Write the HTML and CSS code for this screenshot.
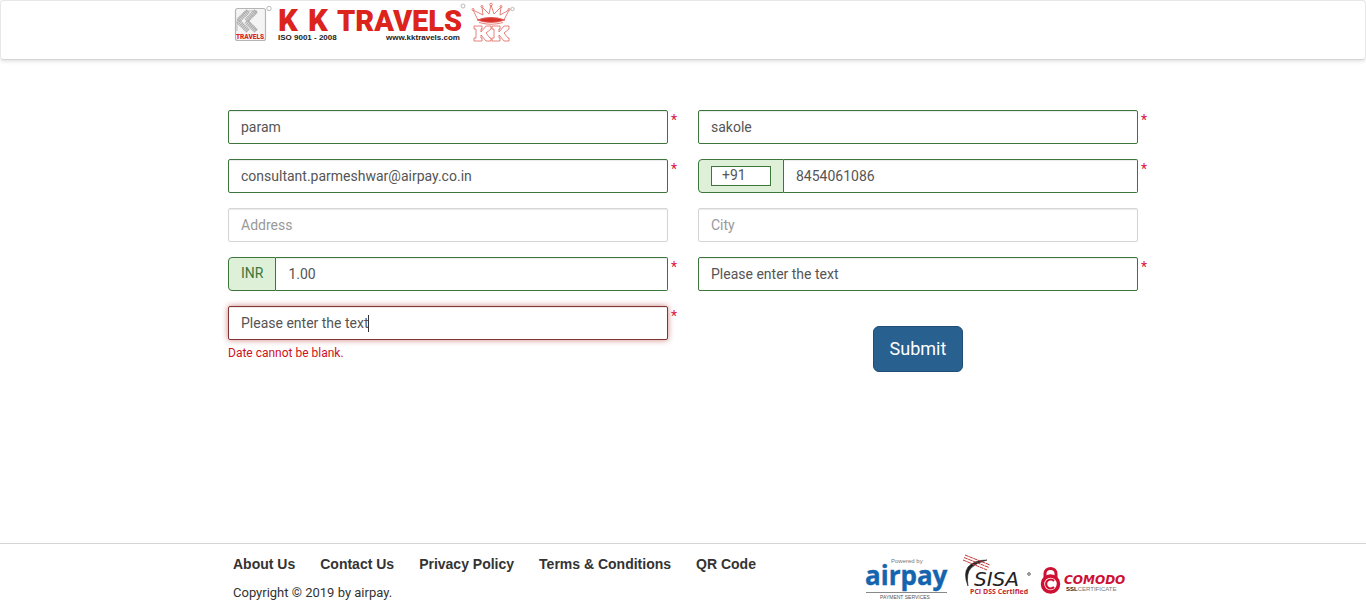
FILE: index.html
```html
<!DOCTYPE html>
<html lang="en">
<head>
<meta charset="utf-8">
<title>K K Travels - Payment</title>
<link rel="stylesheet" href="styles.css">
</head>
<body>
<header class="site-header">
  <div class="container">
    <svg class="brand" width="290" height="44" viewBox="228 0 290 44" role="img" aria-label="K K Travels">
      <rect x="235.500" y="7.500" width="30" height="32" rx="2" fill="#f4f4f4" stroke="#b5b5b5" stroke-width="1.200"/>
      <g fill="none" stroke="#b0b0b0" stroke-width="5" stroke-dasharray="1.300 .5">
        <path d="M248 10L238 20L248 30"/>
        <path d="M256 10L246 20L256 30"/>
      </g>
      <path d="M237 30V20L246 10H257L248 20L257 30" fill="none" stroke="#aaa" stroke-width=".8"/>
      <text class="logo-small" x="236" y="38" font-size="6.500">TRAVELS</text>
      <circle cx="269" cy="7.500" r="2.200" fill="none" stroke="#aaa" stroke-width=".8"/>
      <g class="logo-name">
        <text x="278" y="30" font-size="31">K</text>
        <text x="308" y="30" font-size="31">K</text>
        <text x="337" y="30" font-size="29">TRAVELS</text>
      </g>
      <g class="logo-note" font-size="8">
        <text x="278" y="39">ISO 9001 - 2008</text>
        <text x="386" y="39">www.kktravels.com</text>
      </g>
      <circle cx="463" cy="5" r="2" fill="none" stroke="#aaa" stroke-width=".8"/>
      <g stroke="#e0625a" fill="#fff" stroke-width=".8">
        <path d="M478 19L473 9L483 14L482 6L489 13L491 4L494 13L501 6L500 14L509 9L504 19Q491 14 478 19Z"/>
        <path d="M477 19Q491 14 505 19Q491 24 477 19Z" fill="#d9302a"/>
        <path d="M479 21.500Q491 25 503 21.500" fill="none"/>
        <circle cx="473" cy="8.500" r="1"/><circle cx="482" cy="5.500" r="1"/><circle cx="491" cy="3.500" r="1.300"/><circle cx="501" cy="5.500" r="1"/><circle cx="509" cy="8.500" r="1"/>
        <path d="M474 25H482V28H481V31L486 25H491V28L486 32L490 37H491V40H486L481 34V37H482V40H474V37H476V28H474Z"/>
        <path d="M492 25H500V28H499V31L504 25H509V28L504 32L508 37H509V40H504L499 34V37H500V40H492V37H494V28H492Z"/>
      </g>
      <circle cx="512.500" cy="8" r="1.700" fill="none" stroke="#aaa" stroke-width=".8"/>
    </svg>
  </div>
</header>

<main class="container">
  <form class="pay-form">
    <div class="field valid">
      <input class="control" type="text" aria-label="First name" value="param">
      <span class="required">*</span>
    </div>
    <div class="field valid">
      <input class="control" type="text" aria-label="Last name" value="sakole">
      <span class="required">*</span>
    </div>
    <div class="field valid">
      <input class="control" type="email" aria-label="Email" value="consultant.parmeshwar@airpay.co.in">
      <span class="required">*</span>
    </div>
    <div class="field valid">
      <div class="group">
        <span class="addon"><input class="code" type="text" aria-label="Country code" value="+91"></span>
        <input class="control" type="tel" aria-label="Phone" value="8454061086">
      </div>
      <span class="required">*</span>
    </div>
    <div class="field">
      <input class="control" type="text" aria-label="Address" placeholder="Address">
    </div>
    <div class="field">
      <input class="control" type="text" aria-label="City" placeholder="City">
    </div>
    <div class="field valid">
      <div class="group">
        <label class="addon" for="amount">INR</label>
        <input class="control" id="amount" type="text" value="1.00">
      </div>
      <span class="required">*</span>
    </div>
    <div class="field valid">
      <input class="control" type="text" aria-label="Remarks" value="Please enter the text">
      <span class="required">*</span>
    </div>
    <div class="field invalid">
      <div class="entry">
        <input class="control" type="text" aria-label="Date" aria-describedby="date-error" value="Please enter the text">
        <span class="caret"></span>
      </div>
      <span class="required">*</span>
      <p class="error" id="date-error">Date cannot be blank.</p>
    </div>
    <div class="field actions">
      <button class="submit" type="submit">Submit</button>
    </div>
  </form>
</main>

<footer class="site-footer">
  <div class="container footer-row">
    <div>
      <nav class="links">
        <a href="#">About Us</a>
        <a href="#">Contact Us</a>
        <a href="#">Privacy Policy</a>
        <a href="#">Terms &amp; Conditions</a>
        <a href="#">QR Code</a>
      </nav>
      <p class="copyright">Copyright © 2019 by airpay.</p>
    </div>
    <div class="badges">
      <svg width="98" height="48" viewBox="864 554 98 48" role="img" aria-label="Powered by airpay">
        <text x="891" y="563" font-size="6" fill="#777" font-family="Liberation Sans, sans-serif">Powered by</text>
        <text x="865" y="585" font-size="26" font-weight="700" fill="#1565ae" stroke="#1565ae" stroke-width=".4" font-family="Open Sans, sans-serif">airpay</text>
        <path d="M866 592.500H947" stroke="#888"/>
        <text x="880" y="599" font-size="5" fill="#555" font-family="Liberation Sans, sans-serif">PAYMENT SERVICES</text>
      </svg>
      <svg width="76" height="48" viewBox="962 554 76 48" role="img" aria-label="SISA PCI DSS Certified">
        <path d="M987 560Q974 560 968 567Q963 574 968 586Q966 573 971 568Q976 563 987 560Z" fill="#222" stroke="#222" stroke-width=".6"/>
        <path d="M965 555L990 565M964 557.500L989 567.500M963 560L987 570" stroke="#c23a3a" stroke-width="1" stroke-dasharray="4 .5"/>
        <text x="974" y="586" font-size="20" font-style="italic" fill="#222" font-family="DejaVu Sans, sans-serif">SISA</text>
        <circle cx="1029" cy="574" r="1.300" fill="none" stroke="#333" stroke-width=".8"/>
        <text x="970" y="594" font-size="7" font-weight="700" fill="#c32630" font-family="Open Sans, sans-serif">PCI DSS Certified</text>
      </svg>
      <svg width="90" height="48" viewBox="1038 554 90 48" role="img" aria-label="Comodo SSL Certificate">
        <g fill="none" stroke="#ce1033">
          <path d="M1045 577V573.500A5.500 5 0 0 1 1056 573.500V577" stroke-width="3"/>
          <circle cx="1050.500" cy="584" r="8" stroke-width="3.500" fill="#fff"/>
          <path d="M1054 581A4.500 4.500 0 1 0 1054 587" stroke-width="2.200"/>
        </g>
        <text x="1064" y="584" font-size="12" font-weight="700" font-style="italic" fill="#ce1033" font-family="DejaVu Sans, sans-serif">COMODO</text>
        <text x="1066" y="591" font-size="6" fill="#777" font-family="Liberation Sans, sans-serif"><tspan font-weight="700" fill="#222">SSL</tspan>CERTIFICATE</text>
      </svg>
    </div>
  </div>
</footer>
</body>
</html>
```
FILE: styles.css
```css
* { box-sizing: border-box; }

body {
  display: flex;
  flex-direction: column;
  min-height: 100vh;
  margin: 0;
  background: #fff;
  color: #333;
  font: 14px/20px Roboto, sans-serif;
}

.container {
  width: 100%;
  max-width: 970px;
  margin: 0 auto;
  padding-left: 30px;
}

.site-header {
  min-height: 60px;
  border: 1px solid #e7e7e7;
  border-bottom-color: #d5d5d5;
  border-radius: 4px;
  box-shadow: 0 1px 4px rgba(0, 0, 0, .15);
}

.brand { display: block; }

.logo-name, .logo-small {
  fill: #dc231c;
  font-family: Roboto, sans-serif;
  font-weight: 900;
}

.logo-note {
  fill: #222;
  font-family: "Liberation Sans", sans-serif;
  font-weight: 700;
}

main { flex: 1; }

.pay-form {
  display: grid;
  grid-template-columns: 1fr 1fr;
  row-gap: 15px;
  padding: 50px 0;
}

.field {
  display: grid;
  grid-template-columns: 1fr 30px;
  align-content: start;
}

.control {
  display: block;
  width: 100%;
  min-width: 0;
  height: 34px;
  padding: 6px 12px;
  border: 1px solid #d5d5d5;
  border-radius: 2px;
  outline: 0;
  background: #fff;
  color: #555;
  font: inherit;
  box-shadow: inset 0 1px 1px rgba(0, 0, 0, .08);
}

.control::placeholder { color: #999; }

.valid .control { border-color: #3c763d; }

.invalid .control {
  border-color: #843534;
  box-shadow: inset 0 1px 1px rgba(0, 0, 0, .08), 0 0 6px #ce8483;
}

.required {
  padding-left: 3px;
  color: #dc143c;
}

.group { display: flex; }

.group .control {
  flex: 1;
  border-left: 0;
  border-radius: 0 2px 2px 0;
}

.addon {
  padding: 5px 12px;
  border: 1px solid #3c763d;
  border-radius: 4px 0 0 4px;
  background: #dff0d8;
  color: #3c763d;
}

.code {
  display: block;
  width: 60px;
  height: 20px;
  margin-top: 1px;
  padding: 0 10px 2px;
  border: 1px solid #3c763d;
  background: #fff;
  color: #555;
  font: inherit;
}

.entry { position: relative; }

.caret {
  position: absolute;
  top: 9px;
  left: 140px;
  width: 1px;
  height: 17px;
  background: #333;
}

.error {
  margin: 3px 0 0;
  color: #d0111b;
  font-size: 12px;
}

.actions {
  justify-items: center;
  padding-top: 20px;
}

.submit {
  height: 46px;
  padding: 0 16px;
  border: 1px solid #204d74;
  border-radius: 6px;
  background: #286090;
  color: #fff;
  font: 18px/24px Roboto, sans-serif;
}

.site-footer {
  border-top: 1px solid #d5d5d5;
  font-family: "Liberation Sans", Arial, sans-serif;
}

.footer-row {
  display: flex;
  justify-content: space-between;
  padding: 10px 40px 10px 35px;
}

.links {
  display: flex;
  flex-wrap: wrap;
  gap: 25px;
}

.links a {
  color: #333;
  font-weight: 700;
  text-decoration: none;
}

.copyright {
  margin: 9px 0 0;
  font-family: Roboto, sans-serif;
  font-size: 13px;
}

.badges { display: flex; }
```
